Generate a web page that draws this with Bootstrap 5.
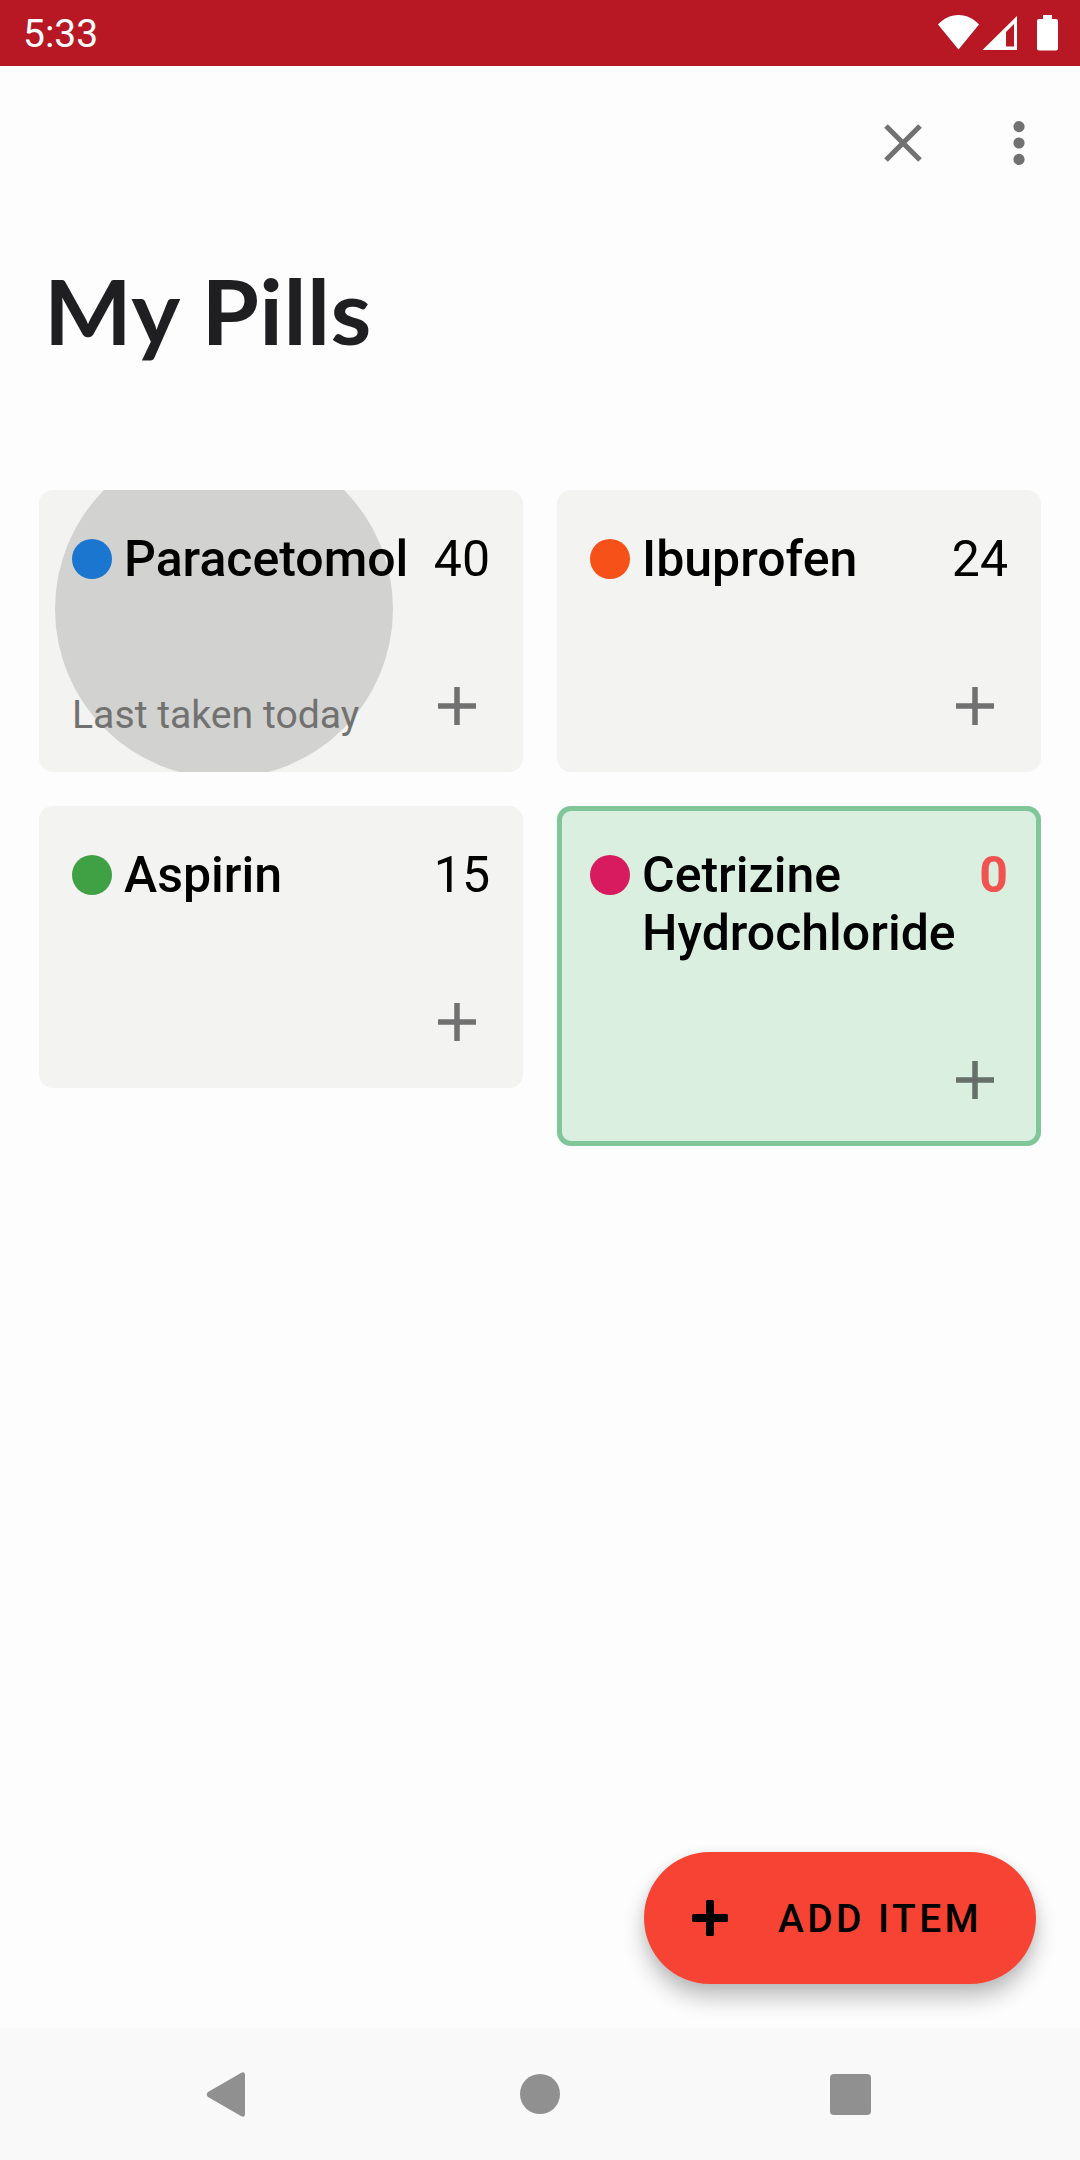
<!DOCTYPE html>
<html lang="en">
<head>
<meta charset="utf-8">
<meta name="viewport" content="width=device-width, initial-scale=1">
<title>My Pills</title>
<link href="https://cdn.jsdelivr.net/npm/bootstrap@5.3.0/dist/css/bootstrap.min.css" rel="stylesheet">
<style>
body { font-family: Roboto, "Liberation Sans", sans-serif; background: #fdfdfd; color: #000; }
.screen { width: 1080px; height: 2160px; }
.status { height: 66px; background: #b71824; color: #fff; font-size: 39px; line-height: 1; padding: 0 22px 0 23px; }
.status span { padding-top: 3px; }
.toolbar-top { height: 154px; padding-right: 55px; gap: 91px; }
.page-title { font: 700 89px/110px Lato, "Liberation Sans", sans-serif; color: #1f1f21; margin: 36px 0 0 44px; letter-spacing: .4px; transform: scaleX(1.045); transform-origin: left; }
.pill-grid { margin-top: 124px; padding: 0 39px; gap: 34px; }
.pill-col { gap: 34px; width: 484px; }
.pill { position: relative; overflow: hidden; border: 0; border-radius: 14px; background: #f3f3f1; min-height: 282px; padding: 40px 33px 31px; }
.pill.selected { background: #daefe0; box-shadow: inset 0 0 0 5px #81c699; min-height: 340px; }
.ripple { position: absolute; width: 338px; height: 338px; left: 16px; top: -50px; border-radius: 50%; background: #d2d2d1; }
.pill-row, .pill-foot { position: relative; }
.plus { margin: 0 14px 16px 0; }
.dot { width: 40px; height: 40px; margin: 9px 12px 0 0; border-radius: 50%; flex: none; }
.pill-name { font-size: 50px; line-height: 58px; font-weight: 500; flex: 1 1 0; min-width: 0; }
.pill-count { font-size: 50px; line-height: 58px; }
.pill-count.empty { color: #f05350; font-weight: 700; }
.taken { font-size: 39.2px; line-height: 46px; color: #717170; padding-top: 1px; }
.fab-row { padding-right: 44px; margin-bottom: 44px; }
.fab { width: 392px; height: 132px; border-radius: 66px; background: #f74333; border: 0; color: #000; font-size: 39px; font-weight: 500; letter-spacing: 3.4px; padding: 0 0 0 48px; gap: 50px; box-shadow: 0 14px 22px rgba(0,0,0,.24), 0 2px 12px rgba(0,0,0,.07); }
.fab span { padding-top: 3px; }
.navigation { height: 132px; background: #f9f9f9; }
svg { display: block; flex: none; }
</style>
</head>
<body>
<div class="screen d-flex flex-column overflow-hidden">
  <header class="status d-flex align-items-center justify-content-between">
    <span>5:33</span>
    <svg width="120" height="36" viewBox="0 0 120 36" fill="#fff">
      <path d="M0 9.500C5 4 12 0 20.500 0S36 4 41 9.500L20.500 34.500Z"/>
      <path fill-rule="evenodd" d="M44.500 35 79 1V35ZM68 31.500H76V9L68 17Z"/>
      <path d="M105 0H114V4H118Q120 4 120 6V33.500Q120 35.500 118 35.500H101Q99 35.500 99 33.500V6Q99 4 101 4H105Z"/>
    </svg>
  </header>
  <div class="toolbar-top d-flex align-items-center justify-content-end">
    <svg width="38" height="38" viewBox="0 0 38 38" stroke="#717171" stroke-width="5.200"><path d="M2 2 36 36M36 2 2 36"/></svg>
    <svg width="12" height="44" viewBox="0 0 12 44" fill="#717171"><circle cx="6" cy="5.600" r="5.600"/><circle cx="6" cy="22" r="5.600"/><circle cx="6" cy="38.400" r="5.600"/></svg>
  </div>
  <h1 class="page-title">My Pills</h1>
  <main class="pill-grid d-flex align-items-start">
    <div class="pill-col d-flex flex-column">
      <article class="pill card justify-content-between">
        <span class="ripple"></span>
        <div class="pill-row d-flex"><span class="dot" style="background:#1a76cf"></span><span class="pill-name">Paracetomol</span><span class="pill-count">40</span></div>
        <div class="pill-foot d-flex justify-content-between align-items-center">
          <span class="taken">Last taken today</span>
          <svg class="plus" width="38" height="38" viewBox="0 0 38 38" stroke="#717171" stroke-width="5.500"><path d="M19 0V38M0 19H38"/></svg>
        </div>
      </article>
      <article class="pill card justify-content-between">
        <div class="pill-row d-flex"><span class="dot" style="background:#3fa044"></span><span class="pill-name">Aspirin</span><span class="pill-count">15</span></div>
        <div class="pill-foot d-flex justify-content-end">
          <svg class="plus" width="38" height="38" viewBox="0 0 38 38" stroke="#717171" stroke-width="5.500"><path d="M19 0V38M0 19H38"/></svg>
        </div>
      </article>
    </div>
    <div class="pill-col d-flex flex-column">
      <article class="pill card justify-content-between">
        <div class="pill-row d-flex"><span class="dot" style="background:#f7511a"></span><span class="pill-name">Ibuprofen</span><span class="pill-count">24</span></div>
        <div class="pill-foot d-flex justify-content-end">
          <svg class="plus" width="38" height="38" viewBox="0 0 38 38" stroke="#717171" stroke-width="5.500"><path d="M19 0V38M0 19H38"/></svg>
        </div>
      </article>
      <article class="pill selected card justify-content-between">
        <div class="pill-row d-flex"><span class="dot" style="background:#d81b5e"></span><span class="pill-name">Cetrizine<br>Hydrochloride</span><span class="pill-count empty">0</span></div>
        <div class="pill-foot d-flex justify-content-end">
          <svg class="plus" width="38" height="38" viewBox="0 0 38 38" stroke="#66706a" stroke-width="5.500"><path d="M19 0V38M0 19H38"/></svg>
        </div>
      </article>
    </div>
  </main>
  <div class="fab-row d-flex justify-content-end mt-auto">
    <button class="fab btn d-flex align-items-center">
      <svg width="36" height="36" viewBox="0 0 36 36"><path d="M14 1.500Q14 0 15.500 0H20.500Q22 0 22 1.500V14H34.500Q36 14 36 15.500V20.500Q36 22 34.500 22H22V34.500Q22 36 20.500 36H15.500Q14 36 14 34.500V22H1.500Q0 22 0 20.500V15.500Q0 14 1.500 14H14Z"/></svg>
      <span>ADD ITEM</span>
    </button>
  </div>
  <nav class="navigation">
    <svg width="1080" height="132" viewBox="0 0 1080 132" fill="#909090">
      <path d="M241 45Q245 43 245 47V86Q245 90 241 88L208 69Q205.500 66.500 208 64Z"/>
      <circle cx="540" cy="66" r="20"/>
      <rect x="830" y="46" width="41" height="41" rx="4"/>
    </svg>
  </nav>
</div>
<script src="https://cdn.jsdelivr.net/npm/bootstrap@5.3.0/dist/js/bootstrap.bundle.min.js"></script>
</body>
</html>
